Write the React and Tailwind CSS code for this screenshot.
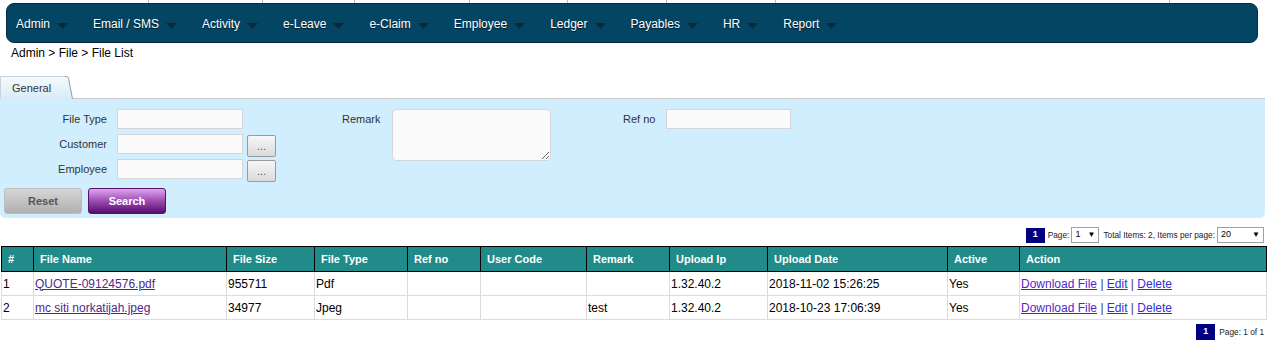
const menu = ['Admin', 'Email / SMS', 'Activity', 'e-Leave', 'e-Claim', 'Employee', 'Ledger', 'Payables', 'HR', 'Report'];

const columns = [
  { title: '#', width: 'w-[32px]' },
  { title: 'File Name', width: 'w-[193px]' },
  { title: 'File Size', width: 'w-[88px]' },
  { title: 'File Type', width: 'w-[93px]' },
  { title: 'Ref no', width: 'w-[73px]' },
  { title: 'User Code', width: 'w-[106px]' },
  { title: 'Remark', width: 'w-[83px]' },
  { title: 'Upload Ip', width: 'w-[98px]' },
  { title: 'Upload Date', width: 'w-[180px]' },
  { title: 'Active', width: 'w-[72px]' },
  { title: 'Action', width: 'w-[247px]' },
];

const files = [
  { no: 1, name: 'QUOTE-09124576.pdf', size: '955711', type: 'Pdf', ref: '', user: '', remark: '', ip: '1.32.40.2', date: '2018-11-02 15:26:25', active: 'Yes' },
  { no: 2, name: 'mc siti norkatijah.jpeg', size: '34977', type: 'Jpeg', ref: '', user: '', remark: 'test', ip: '1.32.40.2', date: '2018-10-23 17:06:39', active: 'Yes' },
];

const Caret = () => (
  <svg width="11" height="6" viewBox="0 0 11 6" className="ml-[7px] mt-[3px] mr-[25px]">
    <polygon points="0,0 11,0 5.5,6" fill="#0a2939" />
  </svg>
);

const PickButton = () => (
  <button className="ml-[4px] mt-[1px] h-[22px] w-[29px] rounded-[2px] border border-[#9a9a9a] bg-gradient-to-b from-[#f7f7f7] to-[#dadada] text-[11px] leading-[18px] text-[#555]">
    ...
  </button>
);

const FormRow = ({ label, withButton }) => (
  <div className="flex h-[25px] items-start">
    <span className="w-[107px] text-right text-[11px] leading-[20px] text-[#333]">{label}</span>
    <input className="ml-[10px] h-[20px] w-[126px] border border-[#d6d6d6] bg-[#fafafa] outline-none" />
    {withButton && <PickButton />}
  </div>
);

const PageBox = ({ className }) => (
  <div className={`flex h-[15px] w-[19px] items-center justify-center bg-[#000080] text-[9px] font-bold text-white ${className || ''}`}>1</div>
);

const FakeSelect = ({ value, width }) => (
  <div className={`flex h-[16px] ${width} items-center justify-between border border-[#a0a0a0] bg-white px-[3px] text-[9px] text-black`}>
    <span>{value}</span>
    <span className="text-[8px]">▼</span>
  </div>
);

export default function App() {
  return (
    <div className="w-[1272px] h-[356px] overflow-hidden bg-white font-['Liberation_Sans',Arial,sans-serif] text-black">
      <div className="flex h-[3px]">
        <div className="w-[148px]" />
        <div className="w-[114px] border-l border-[#b8b8b8]" />
        <div className="w-[92px] border-l border-[#b8b8b8]" />
        <div className="w-[115px] border-l border-[#b8b8b8]" />
        <div className="w-[98px] border-l border-[#b8b8b8]" />
        <div className="w-[99px] border-l border-[#b8b8b8]" />
        <div className="w-[109px] border-l border-[#b8b8b8]" />
        <div className="w-[394px] border-l border-[#b8b8b8]" />
        <div className="w-[1px] border-l border-[#b8b8b8]" />
      </div>

      <nav className="ml-[6px] flex h-[40px] w-[1252px] items-center rounded-[8px] border border-[#022b3f] bg-[#034563] pl-[9px] pt-[2px]">
        {menu.map((item) => (
          <div key={item} className="flex items-center">
            <span className="text-[12px] text-white [text-shadow:0_1px_1px_#001a28]">{item}</span>
            <Caret />
          </div>
        ))}
      </nav>

      <div className="mt-[2px] h-[16px] pl-[11px] text-[12px] leading-[16px]">Admin &gt; File &gt; File List</div>

      <div className="mt-[15px] flex items-end">
        <div className="flex h-[23px] items-stretch">
          <div className="flex w-[65px] items-center border-t border-l border-[#c9d3d9] bg-gradient-to-b from-[#f6fafc] to-[#d7ecf7] pl-[11px] text-[11px] text-[#333]">
            General
          </div>
          <svg width="8" height="23" viewBox="0 0 8 23" className="block">
            <defs>
              <linearGradient id="tabg" x1="0" y1="0" x2="0" y2="1">
                <stop offset="0" stopColor="#f6fafc" />
                <stop offset="1" stopColor="#d7ecf7" />
              </linearGradient>
            </defs>
            <path d="M0 0.5 H1.5 Q3 0.5 3.6 2.5 L7.5 23 H0 Z" fill="url(#tabg)" />
            <path d="M0 0.5 H1.5 Q3 0.5 3.6 2.5 L7.5 23" fill="none" stroke="#8e9ca6" strokeWidth="1" />
          </svg>
        </div>
        <div className="h-[1px] w-[1192px] bg-[#c8c8c8]" />
      </div>

      <div className="w-[1265px] rounded-b-[5px] bg-[#d0eefd] pt-[10px] pb-[4px]">
        <div className="flex items-start">
          <div className="w-[276px]">
            <FormRow label="File Type" />
            <FormRow label="Customer" withButton />
            <FormRow label="Employee" withButton />
          </div>
          <span className="ml-[66px] w-[39px] whitespace-nowrap text-[11px] leading-[20px] text-[#333]">Remark</span>
          <textarea className="ml-[11px] h-[52px] w-[159px] rounded-[4px] border border-[#d6d6d6] bg-[#fafafa] outline-none" />
          <span className="ml-[72px] w-[32px] whitespace-nowrap text-[11px] leading-[20px] text-[#333]">Ref no</span>
          <input className="ml-[11px] h-[20px] w-[125px] border border-[#d6d6d6] bg-[#fafafa] outline-none" />
        </div>
        <div className="mt-[4px] flex pl-[4px]">
          <button className="h-[26px] w-[78px] rounded-[3px] border border-[#bdbdbd] bg-gradient-to-b from-[#d6d6d6] to-[#b0b0b0] text-[11px] font-bold text-[#555]">
            Reset
          </button>
          <button className="ml-[6px] h-[26px] w-[78px] rounded-[3px] border border-[#5c0c6e] bg-gradient-to-b from-[#dca6ec] via-[#9c4bb4] to-[#57096b] text-[11px] font-bold text-white">
            Search
          </button>
        </div>
      </div>

      <div className="mt-[9px] flex h-[16px] items-center justify-end pr-[8px] text-[8.3px] text-[#222]">
        <PageBox />
        <span className="ml-[3px] mr-[2px]">Page:</span>
        <FakeSelect value="1" width="w-[28px]" />
        <span className="ml-[4px] mr-[2px]">Total Items: 2, Items per page:</span>
        <FakeSelect value="20" width="w-[47px]" />
      </div>

      <table className="ml-[1px] mt-[3px] w-[1264px] table-fixed border-collapse">
        <colgroup>
          {columns.map((col) => (
            <col key={col.title} className={col.width} />
          ))}
        </colgroup>
        <thead>
          <tr>
            {columns.map((col) => (
              <th key={col.title} className="h-[25px] border border-black bg-[#218b8a] pl-[6px] text-left text-[11px] font-bold text-white">
                {col.title}
              </th>
            ))}
          </tr>
        </thead>
        <tbody>
          {files.map((file) => (
            <tr key={file.no}>
              <td className="h-[24px] border border-[#dcdcdc] pl-[1px] text-[12px]">{file.no}</td>
              <td className="border border-[#dcdcdc] pl-[1px] text-[12px]">
                <a href="#" className="text-[#4e2a8c] underline">{file.name}</a>
              </td>
              <td className="border border-[#dcdcdc] pl-[1px] text-[12px]">{file.size}</td>
              <td className="border border-[#dcdcdc] pl-[1px] text-[12px]">{file.type}</td>
              <td className="border border-[#dcdcdc] pl-[1px] text-[12px]">{file.ref}</td>
              <td className="border border-[#dcdcdc] pl-[1px] text-[12px]">{file.user}</td>
              <td className="border border-[#dcdcdc] pl-[1px] text-[12px]">{file.remark}</td>
              <td className="border border-[#dcdcdc] pl-[1px] text-[12px]">{file.ip}</td>
              <td className="border border-[#dcdcdc] pl-[1px] text-[12px]">{file.date}</td>
              <td className="border border-[#dcdcdc] pl-[1px] text-[12px]">{file.active}</td>
              <td className="border border-[#dcdcdc] pl-[1px] text-[12px] text-[#444]">
                <a href="#" className="text-[#5b1ccc] underline">Download File</a>
                {' | '}
                <a href="#" className="text-[#3030d6] underline">Edit</a>
                {' | '}
                <a href="#" className="text-[#3030d6] underline">Delete</a>
              </td>
            </tr>
          ))}
        </tbody>
      </table>

      <div className="mt-[4px] flex items-center justify-end pr-[8px] text-[8.3px] text-[#222]">
        <PageBox className="w-[18px] h-[16px]" />
        <span className="ml-[4px]">Page: 1 of 1</span>
      </div>
    </div>
  );
}
